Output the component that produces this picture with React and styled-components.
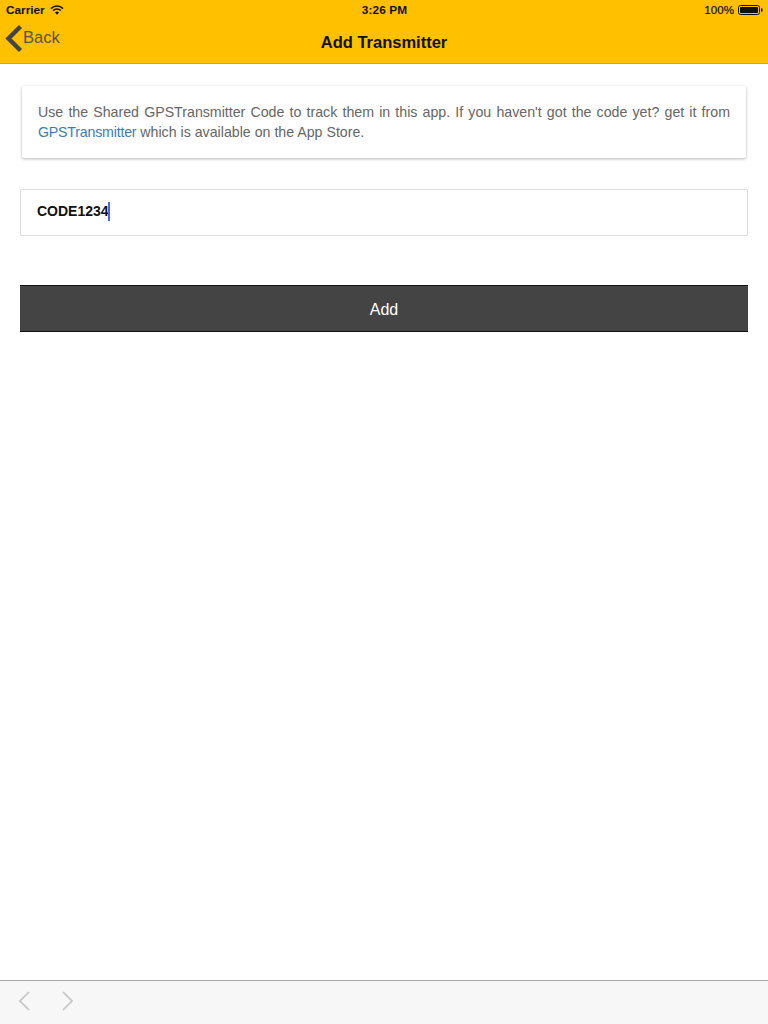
import React from "react";
import styled, { createGlobalStyle } from "styled-components";

const Global = createGlobalStyle`
  html, body { margin: 0; padding: 0; background: #fff; }
  body { font-family: "Liberation Sans", Arial, sans-serif; }
`;

const Page = styled.div`
  width: 768px;
  height: 1024px;
  display: flex;
  flex-direction: column;
  overflow: hidden;
`;

const Header = styled.header`
  height: 64px;
  box-sizing: border-box;
  background: #ffc000;
  border-bottom: 1px solid #d9a812;
  display: flex;
  flex-direction: column;
  flex: none;
`;

const StatusBar = styled.div`
  height: 20px;
  padding: 0 5px 0 6px;
  display: grid;
  grid-template-columns: 1fr auto 1fr;
  align-items: center;
  color: #111;
  flex: none;
`;

const StatusLeft = styled.div`
  display: flex;
  align-items: center;
  gap: 5px;
`;

const StatusTime = styled.div`
  font-weight: 700;
  font-size: 11.8px;
  letter-spacing: 0.1px;
`;

const StatusRight = styled.div`
  display: flex;
  align-items: center;
  justify-content: flex-end;
  gap: 4px;
`;

const Carrier = styled.span`
  font-weight: 700;
  font-size: 11.8px;
`;

const Percent = styled.span`
  font-size: 11.6px;
  padding-bottom: 2px;
  -webkit-text-stroke: 0.2px #111;
`;

const NavBar = styled.div`
  flex: 1;
  display: grid;
  grid-template-columns: 1fr auto 1fr;
  align-items: center;
`;

const BackLink = styled.div`
  display: flex;
  align-items: center;
  padding: 0 0 5px 5px;
  color: #5a5540;
  font-size: 16.6px;
  line-height: 30px;
`;

const BackLabel = styled.span`
  padding-bottom: 3px;
`;

const Title = styled.div`
  font-size: 16.5px;
  font-weight: 700;
  color: #111;
  padding-top: 2px;
`;

const Content = styled.main`
  flex: 1;
  padding: 22px 20px 0;
  display: flex;
  flex-direction: column;
`;

const Card = styled.div`
  margin: 0 2px 31px;
  height: 72px;
  box-sizing: border-box;
  padding: 16px;
  background: #fff;
  border-radius: 2px;
  box-shadow: 0 1px 3px rgba(0, 0, 0, 0.3);
  font-size: 14.2px;
  line-height: 20px;
  color: #666;
  text-align: justify;
`;

const Link = styled.a`
  color: #3a7cb8;
  text-decoration: none;
  letter-spacing: -0.2px;
`;

const InputBox = styled.div`
  height: 47px;
  box-sizing: border-box;
  border: 1px solid #ddd;
  border-radius: 2px;
  padding: 0 16px 3px;
  display: flex;
  align-items: center;
  font-size: 14px;
  font-weight: 700;
  color: #111;
  margin-bottom: 49px;
`;

const Caret = styled.span`
  width: 2px;
  height: 19px;
  background: #4a66e8;
  margin-left: -1px;
`;

const AddButton = styled.button`
  height: 47px;
  border: 0;
  border-top: 1px solid #111;
  border-bottom: 1px solid #111;
  background: #444;
  color: #fff;
  font-family: inherit;
  font-size: 16px;
  padding: 3px 0 0;
`;

const Footer = styled.footer`
  height: 44px;
  flex: none;
  box-sizing: border-box;
  border-top: 1px solid #a7a7a7;
  background: #f7f7f7;
  display: flex;
  align-items: center;
  gap: 30px;
  padding: 0 0 3px 19px;
`;

const Wifi = () => (
  <svg width="14" height="10" viewBox="0 0 14 10" fill="none" stroke="#111">
    <path d="M1 3.6a8.5 8.5 0 0 1 12 0" strokeWidth="1.5" />
    <path d="M3.2 5.6a5.4 5.4 0 0 1 7.6 0" strokeWidth="1.5" />
    <path d="M7 9.8 5 7.6a2.8 2.8 0 0 1 4 0z" fill="#111" stroke="none" />
  </svg>
);

const Battery = () => (
  <svg width="25" height="10" viewBox="0 0 25 10">
    <rect x="0.5" y="0.5" width="21" height="9" rx="2" fill="none" stroke="#111" />
    <rect x="2" y="2" width="18" height="6" rx="0.8" fill="#111" />
    <path d="M23 3.2h.6a1 1 0 0 1 1 1v1.6a1 1 0 0 1-1 1H23z" fill="#111" />
  </svg>
);

const BackChevron = () => (
  <svg width="18" height="30" viewBox="0 0 18 30" fill="none">
    <path d="M15.5 2.5 3.5 14.5 15.5 26.5" stroke="#444" strokeWidth="4.4" />
  </svg>
);

const FootChevron = ({ flip }) => (
  <svg width="12" height="20" viewBox="0 0 12 20" fill="none">
    <path d={flip ? "M2 1l9 9-9 9" : "M10 1 1 10l9 9"} stroke="#c4c4c4" strokeWidth="1.7" />
  </svg>
);

export default function App() {
  return (
    <Page>
      <Global />
      <Header>
        <StatusBar>
          <StatusLeft>
            <Carrier>Carrier</Carrier>
            <Wifi />
          </StatusLeft>
          <StatusTime>3:26 PM</StatusTime>
          <StatusRight>
            <Percent>100%</Percent>
            <Battery />
          </StatusRight>
        </StatusBar>
        <NavBar>
          <BackLink>
            <BackChevron />
            <BackLabel>Back</BackLabel>
          </BackLink>
          <Title>Add Transmitter</Title>
          <div />
        </NavBar>
      </Header>
      <Content>
        <Card>
          Use the Shared GPSTransmitter Code to track them in this app. If you haven't got the code yet? get it from{" "}
          <Link>GPSTransmitter</Link> which is available on the App Store.
        </Card>
        <InputBox>
          CODE1234
          <Caret />
        </InputBox>
        <AddButton>Add</AddButton>
      </Content>
      <Footer>
        <FootChevron />
        <FootChevron flip />
      </Footer>
    </Page>
  );
}
